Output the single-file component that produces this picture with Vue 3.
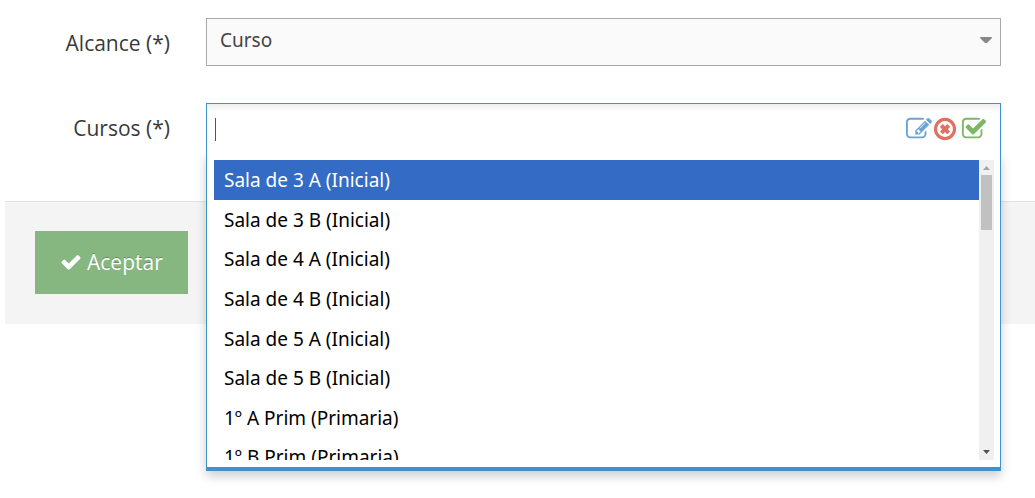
<script setup>
import { ref } from 'vue'

const scope = ref('Curso')
const search = ref('')
const active = ref(0)
const courses = [
  'Sala de 3 A (Inicial)',
  'Sala de 3 B (Inicial)',
  'Sala de 4 A (Inicial)',
  'Sala de 4 B (Inicial)',
  'Sala de 5 A (Inicial)',
  'Sala de 5 B (Inicial)',
  '1º A Prim (Primaria)',
  '1º B Prim (Primaria)',
]
</script>

<template>
  <form class="form" @submit.prevent>
    <div class="row">
      <label class="label" for="scope">Alcance (*)</label>
      <div class="select-wrap">
        <select id="scope" v-model="scope" class="select">
          <option>Curso</option>
        </select>
        <svg class="select-arrow" viewBox="0 0 12 6" aria-hidden="true"><path d="M0 1Q0 0 1 0H11Q12 0 12 1L7 6H5Z" /></svg>
      </div>
    </div>

    <div class="row">
      <label class="label" for="courses">Cursos (*)</label>
      <div class="combo">
        <div class="combo-field">
          <span class="caret"></span>
          <input id="courses" v-model="search" class="combo-input" type="text" autocomplete="off" />
          <button type="button" class="tool edit" aria-label="Editar">
            <svg viewBox="0 0 1792 1792" width="26" height="26"><path d="M888 1184l116-116-152-152-116 116v56h96v96h56zm440-720q-16-16-33 1l-350 350q-17 17-1 33t33-1l350-350q17-17 1-33zm80 594v190q0 119-84.5 203.5t-203.5 84.5h-832q-119 0-203.5-84.5t-84.5-203.5v-832q0-119 84.5-203.5t203.5-84.5h832q63 0 117 25 15 7 18 23 3 17-9 29l-49 49q-14 14-32 8-23-6-45-6h-832q-66 0-113 47t-47 113v832q0 66 47 113t113 47h832q66 0 113-47t47-113v-126q0-13 9-22l64-64q15-15 35-7t20 29zm-96-738l288 288-672 672h-288v-288zm444 132l-92 92-288-288 92-92q28-28 68-28t68 28l152 152q28 28 28 68t-28 68z" /></svg>
          </button>
          <button type="button" class="tool clear" aria-label="Quitar todos">
            <svg viewBox="0 0 1792 1792" width="26" height="26"><path d="M1225 1089l-146 146q-10 10-23 10t-23-10l-137-137-137 137q-10 10-23 10t-23-10l-146-146q-10-10-10-23t10-23l137-137-137-137q-10-10-10-23t10-23l146-146q10-10 23-10t23 10l137 137 137-137q10-10 23-10t23 10l146 146q10 10 10 23t-10 23l-137 137 137 137q10 10 10 23t-10 23zm215-193q0-148-73-273t-198-198-273-73-273 73-198 198-73 273 73 273 198 198 273 73 273-73 198-198 73-273zm224 0q0 209-103 385.5t-279.5 279.5-385.5 103-385.5-103-279.5-279.5-103-385.5 103-385.5 279.5-279.5 385.5-103 385.5 103 279.5 279.5 103 385.5z" /></svg>
          </button>
          <button type="button" class="tool all" aria-label="Seleccionar todos">
            <svg viewBox="0 0 1792 1792" width="26" height="26"><path d="M1472 930v318q0 119-84.5 203.5t-203.5 84.5h-832q-119 0-203.5-84.5t-84.5-203.5v-832q0-119 84.5-203.5t203.5-84.5h832q63 0 117 25 15 7 18 23 3 17-9 29l-49 49q-10 10-23 10-3 0-9-2-23-6-45-6h-832q-66 0-113 47t-47 113v832q0 66 47 113t113 47h832q66 0 113-47t47-113v-254q0-13 9-22l64-64q10-10 23-10 6 0 12 3 20 8 20 29zm231-489l-814 814q-24 24-57 24t-57-24l-430-430q-24-24-24-57t24-57l110-110q24-24 57-24t57 24l263 263 647-647q24-24 57-24t57 24l110 110q24 24 24 57t-24 57z" /></svg>
          </button>
        </div>
        <div class="menu">
          <ul class="options" role="listbox" aria-label="Cursos">
            <li
              v-for="(course, i) in courses"
              :key="course"
              class="option"
              :class="{ active: i === active }"
              role="option"
              :aria-selected="i === active"
              @mouseenter="active = i"
            >{{ course }}</li>
          </ul>
          <div class="scrollbar" aria-hidden="true">
            <svg class="scroll-btn up" viewBox="0 0 15 15"><path d="M4 10L7.500 6L11 10Z" /></svg>
            <div class="thumb"></div>
            <svg class="scroll-btn down" viewBox="0 0 15 15"><path d="M4 5L7.500 9L11 5Z" /></svg>
          </div>
        </div>
      </div>
    </div>

    <div class="actions">
      <button type="submit" class="submit">
        <svg viewBox="0 0 1792 1792" width="22" height="22" aria-hidden="true"><path d="M1671 566q0 40-28 68l-724 724-136 136q-28 28-68 28t-68-28l-136-136-362-362q-28-28-28-68t28-68l136-136q28-28 68-28t68 28l294 295 656-657q28-28 68-28t68 28l136 136q28 28 28 68z" /></svg>
        <span>Aceptar</span>
      </button>
    </div>
  </form>
</template>

<style>
body {
  background: #fff;
}
</style>

<style scoped>
.form {
  min-height: 100vh;
  box-sizing: border-box;
  padding-top: 18px;
  font-family: "Open Sans", "Noto Sans", sans-serif;
  color: #393939;
}
.row {
  display: grid;
  grid-template-columns: 170px 1fr;
  column-gap: 36px;
  align-items: start;
  padding-right: 34px;
  margin-bottom: 35px;
}
.label {
  font-size: 21px;
  line-height: 50px;
  text-align: right;
}
.select-wrap {
  position: relative;
}
.select {
  display: block;
  width: 100%;
  height: 48px;
  box-sizing: border-box;
  padding: 0 32px 4px 13px;
  border: 1px solid #aaa;
  border-radius: 0;
  background: #fafafa;
  color: #444;
  font: inherit;
  font-family: "Noto Sans", "Open Sans", sans-serif;
  font-size: 19px;
  appearance: none;
}
.select-arrow {
  position: absolute;
  top: 19px;
  right: 9px;
  width: 12px;
  height: 6px;
  fill: #888;
  pointer-events: none;
}
.combo {
  position: relative;
  height: 63px;
}
.combo-field {
  display: flex;
  align-items: center;
  height: 50px;
  box-sizing: border-box;
  padding: 2px 13px 0 8px;
  border: 1px solid #3f93c8;
  border-bottom: 0;
  background: linear-gradient(#eee, #fff 8px);
}
.caret {
  width: 1px;
  height: 23px;
  background: #555;
}
.combo-input {
  flex: 1;
  min-width: 0;
  height: 40px;
  padding: 0;
  border: 0;
  outline: 0;
  background: transparent;
  font: inherit;
  font-size: 19px;
  caret-color: transparent;
}
.tool {
  display: block;
  padding: 0 0 1px;
  border: 0;
  background: none;
}
.tool svg {
  display: block;
  fill: currentColor;
}
.edit {
  color: #6ba3d6;
}
.clear {
  color: #e0705f;
}
.all {
  margin-left: 3px;
  color: #7db665;
}
.menu {
  position: absolute;
  top: 50px;
  left: 0;
  right: 0;
  z-index: 2;
  display: flex;
  padding: 7px 6px 7px 7px;
  border: solid #3f93c8;
  border-width: 0 1px 4px;
  background: #fff;
  box-shadow: 0 5px 10px rgba(0, 0, 0, 0.2);
  clip-path: inset(0 -20px -30px -20px);
}
.options {
  flex: 1;
  height: 300px;
  margin: 0;
  padding: 0;
  overflow: hidden;
  list-style: none;
}
.option {
  padding: 8px 10px 6px;
  font-family: "Noto Sans", "Open Sans", sans-serif;
  font-size: 19px;
  line-height: 1.35;
  color: #000;
}
.option.active {
  background: #336bc5;
  color: #fff;
}
.scrollbar {
  display: flex;
  flex-direction: column;
  align-items: center;
  width: 15px;
  background: #f0f0f0;
}
.scroll-btn {
  width: 15px;
  height: 15px;
}
.up {
  fill: #a3a3a3;
}
.down {
  margin-top: auto;
  fill: #505050;
}
.thumb {
  width: 11px;
  height: 55px;
  background: #c1c1c1;
}
.actions {
  margin-left: 5px;
  padding: 29px 30px 30px;
  border-top: 1px solid #e3e3e3;
  background: #f4f4f4;
}
.submit {
  display: flex;
  align-items: center;
  gap: 5px;
  height: 63px;
  padding: 0 25px 1px;
  border: 0;
  background: #87b781;
  color: #fff;
  font: inherit;
  font-size: 21px;
  text-shadow: 0 -1px 0 rgba(0, 0, 0, 0.25);
}
.submit svg {
  fill: currentColor;
}
</style>
